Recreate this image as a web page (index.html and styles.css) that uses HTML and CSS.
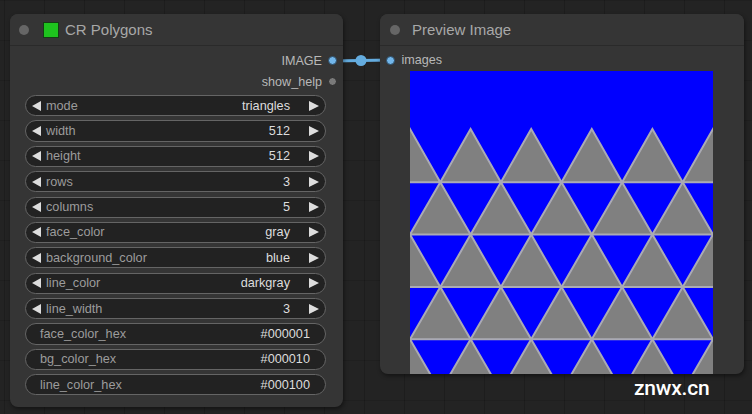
FILE: index.html
```html
<!DOCTYPE html>
<html>
<head>
<meta charset="utf-8">
<link rel="stylesheet" href="styles.css">
</head>
<body>
<div class="canvas">
  <svg class="links" width="752" height="414" viewBox="0 0 752 414">
    <line x1="332" y1="61" x2="390" y2="60" stroke="#64acdf" stroke-width="3"/>
    <circle cx="361" cy="60.5" r="5.5" fill="#64acdf"/>
  </svg>

  <div class="node node-polygons">
    <div class="node-header">
      <span class="hdot"></span>
      <span class="swatch"></span>
      <span class="title">CR Polygons</span>
    </div>
    <div class="outputs">
      <div class="slot-out"><span class="slot-label">IMAGE</span><span class="sdot sdot-image"></span></div>
      <div class="slot-out"><span class="slot-label">show_help</span><span class="sdot sdot-gray"></span></div>
    </div>
    <div class="widgets">
      <div class="widget num"><span class="arrow-l"></span><span class="wlabel">mode</span><span class="wval">triangles</span><span class="arrow-r"></span></div>
      <div class="widget num"><span class="arrow-l"></span><span class="wlabel">width</span><span class="wval">512</span><span class="arrow-r"></span></div>
      <div class="widget num"><span class="arrow-l"></span><span class="wlabel">height</span><span class="wval">512</span><span class="arrow-r"></span></div>
      <div class="widget num"><span class="arrow-l"></span><span class="wlabel">rows</span><span class="wval">3</span><span class="arrow-r"></span></div>
      <div class="widget num"><span class="arrow-l"></span><span class="wlabel">columns</span><span class="wval">5</span><span class="arrow-r"></span></div>
      <div class="widget num"><span class="arrow-l"></span><span class="wlabel">face_color</span><span class="wval">gray</span><span class="arrow-r"></span></div>
      <div class="widget num"><span class="arrow-l"></span><span class="wlabel">background_color</span><span class="wval">blue</span><span class="arrow-r"></span></div>
      <div class="widget num"><span class="arrow-l"></span><span class="wlabel">line_color</span><span class="wval">darkgray</span><span class="arrow-r"></span></div>
      <div class="widget num"><span class="arrow-l"></span><span class="wlabel">line_width</span><span class="wval">3</span><span class="arrow-r"></span></div>
      <div class="widget text"><span class="wlabel">face_color_hex</span><span class="wval">#000001</span></div>
      <div class="widget text"><span class="wlabel">bg_color_hex</span><span class="wval">#000010</span></div>
      <div class="widget text"><span class="wlabel">line_color_hex</span><span class="wval">#000100</span></div>
    </div>
  </div>

  <div class="node node-preview">
    <div class="node-header">
      <span class="hdot"></span>
      <span class="title title-preview">Preview Image</span>
    </div>
    <div class="slot-in"><span class="sdot sdot-image"></span><span class="slot-label">images</span></div>
    <div class="preview">
      <svg width="303" height="303" viewBox="0 0 303 303">
        <rect x="0" y="0" width="303" height="303" fill="#0000ff"/>
        <g fill="#808080" stroke="#aaaab4" stroke-width="2" stroke-linejoin="miter">
          <!-- row 1 -->
          <polygon points="0,58 -30.3,111.3 30.3,111.3"/>
          <polygon points="60.6,58 30.3,111.3 90.9,111.3"/>
          <polygon points="121.2,58 90.9,111.3 151.5,111.3"/>
          <polygon points="181.8,58 151.5,111.3 212.1,111.3"/>
          <polygon points="242.4,58 212.1,111.3 272.7,111.3"/>
          <polygon points="303,58 272.7,111.3 333.3,111.3"/>
          <!-- row 2 -->
          <polygon points="-30.3,111.3 -60.6,163.6 0,163.6"/>
          <polygon points="30.3,111.3 0,163.6 60.6,163.6"/>
          <polygon points="90.9,111.3 60.6,163.6 121.2,163.6"/>
          <polygon points="151.5,111.3 121.2,163.6 181.8,163.6"/>
          <polygon points="212.1,111.3 181.8,163.6 242.4,163.6"/>
          <polygon points="272.7,111.3 242.4,163.6 303,163.6"/>
          <polygon points="333.3,111.3 303,163.6 363.6,163.6"/>
          <!-- row 3 -->
          <polygon points="0,163.6 -30.3,215.9 30.3,215.9"/>
          <polygon points="60.6,163.6 30.3,215.9 90.9,215.9"/>
          <polygon points="121.2,163.6 90.9,215.9 151.5,215.9"/>
          <polygon points="181.8,163.6 151.5,215.9 212.1,215.9"/>
          <polygon points="242.4,163.6 212.1,215.9 272.7,215.9"/>
          <polygon points="303,163.6 272.7,215.9 333.3,215.9"/>
          <!-- row 4 -->
          <polygon points="-30.3,215.9 -60.6,268.2 0,268.2"/>
          <polygon points="30.3,215.9 0,268.2 60.6,268.2"/>
          <polygon points="90.9,215.9 60.6,268.2 121.2,268.2"/>
          <polygon points="151.5,215.9 121.2,268.2 181.8,268.2"/>
          <polygon points="212.1,215.9 181.8,268.2 242.4,268.2"/>
          <polygon points="272.7,215.9 242.4,268.2 303,268.2"/>
          <polygon points="333.3,215.9 303,268.2 363.6,268.2"/>
          <!-- row 5 -->
          <polygon points="0,268.2 -30.3,320.5 30.3,320.5"/>
          <polygon points="60.6,268.2 30.3,320.5 90.9,320.5"/>
          <polygon points="121.2,268.2 90.9,320.5 151.5,320.5"/>
          <polygon points="181.8,268.2 151.5,320.5 212.1,320.5"/>
          <polygon points="242.4,268.2 212.1,320.5 272.7,320.5"/>
          <polygon points="303,268.2 272.7,320.5 333.3,320.5"/>
        </g>
      </svg>
    </div>
  </div>

  <div class="watermark">znwx.cn</div>
</div>
</body>
</html>
```

FILE: styles.css
```css
html, body {
  margin: 0;
  padding: 0;
}
body {
  width: 752px;
  height: 414px;
  overflow: hidden;
  background: #222222;
  font-family: "Liberation Sans", Arial, sans-serif;
}
.canvas {
  position: relative;
  width: 752px;
  height: 414px;
  background-color: #232323;
  background-image:
    linear-gradient(to right, rgba(0,0,0,0.18) 1px, transparent 1px),
    linear-gradient(to bottom, rgba(0,0,0,0.12) 1px, transparent 1px);
  background-size: 40px 40px;
  background-position: 4px 0;
}
.links {
  position: absolute;
  left: 0;
  top: 0;
  z-index: 0;
}
.node {
  position: absolute;
  z-index: 1;
  background: #353535;
  border-radius: 8px;
  box-shadow: 1px 2px 4px rgba(0,0,0,0.45);
  display: flex;
  flex-direction: column;
  overflow: hidden;
  box-sizing: border-box;
}
.node-polygons {
  left: 10px;
  top: 14px;
  width: 333px;
  height: 393px;
}
.node-preview {
  left: 380px;
  top: 14px;
  width: 364px;
  height: 360px;
}
.node-header {
  height: 31px;
  flex: none;
  display: flex;
  align-items: center;
  padding-left: 9px;
  border-bottom: 1px solid #2a2a2a;
  background: #353535;
}
.node-preview .node-header {
  padding-left: 10px;
}
.hdot {
  width: 10px;
  height: 10px;
  border-radius: 50%;
  background: #666666;
  flex: none;
}
.swatch {
  width: 14px;
  height: 14px;
  margin-left: 14px;
  background: #1ec31e;
  border: 1px solid #143d14;
  flex: none;
}
.title {
  margin-left: 6px;
  font-size: 15px;
  color: #a8a8a8;
  line-height: 1;
}
.title-preview {
  margin-left: 12px;
}
.outputs {
  padding-top: 4px;
  display: flex;
  flex-direction: column;
}
.slot-out {
  height: 21px;
  display: flex;
  align-items: center;
  justify-content: flex-end;
  padding-right: 6px;
}
.slot-label {
  font-size: 12.6px;
  color: #b8b8b8;
}
.slot-out .sdot {
  margin-left: 6px;
}
.sdot {
  width: 9px;
  height: 9px;
  border-radius: 50%;
  box-sizing: border-box;
  flex: none;
}
.sdot-image {
  background: #72b6ea;
  border: 1px solid #2b4a63;
}
.sdot-gray {
  background: #7a7a7a;
  border: 1px solid #2a2a2a;
}
.widgets {
  padding: 3px 17px 0 15px;
  display: flex;
  flex-direction: column;
  gap: 4.2px;
}
.widget {
  height: 21.2px;
  box-sizing: border-box;
  border: 1px solid #656565;
  border-radius: 11px;
  background: #222222;
  display: flex;
  align-items: center;
  font-size: 12.7px;
}
.widget.num {
  padding: 0 6px 0 6px;
}
.widget.text {
  padding: 0 15px 0 14px;
}
.wlabel {
  flex: 1;
  color: #9c9c9c;
  white-space: nowrap;
}
.num .wlabel {
  margin-left: 5px;
}
.wval {
  color: #dddddd;
  white-space: nowrap;
}
.arrow-l {
  width: 0;
  height: 0;
  border-top: 5px solid transparent;
  border-bottom: 5px solid transparent;
  border-right: 9px solid #dddddd;
  flex: none;
}
.arrow-r {
  width: 0;
  height: 0;
  border-top: 5px solid transparent;
  border-bottom: 5px solid transparent;
  border-left: 10px solid #dddddd;
  margin-left: 19px;
  flex: none;
}
.slot-in {
  margin-top: 4px;
  height: 21px;
  display: flex;
  align-items: center;
  padding-left: 5.5px;
}
.slot-in .slot-label {
  margin-left: 7px;
}
.preview {
  margin-top: 1px;
  margin-left: 30px;
  width: 303px;
  height: 303px;
  flex: none;
}
.preview svg {
  display: block;
}
.watermark {
  position: absolute;
  z-index: 2;
  left: 634px;
  top: 376px;
  font-family: Roboto, "Liberation Sans", sans-serif;
  font-weight: 500;
  font-size: 21px;
  color: #ffffff;
  letter-spacing: -0.2px;
}
```
